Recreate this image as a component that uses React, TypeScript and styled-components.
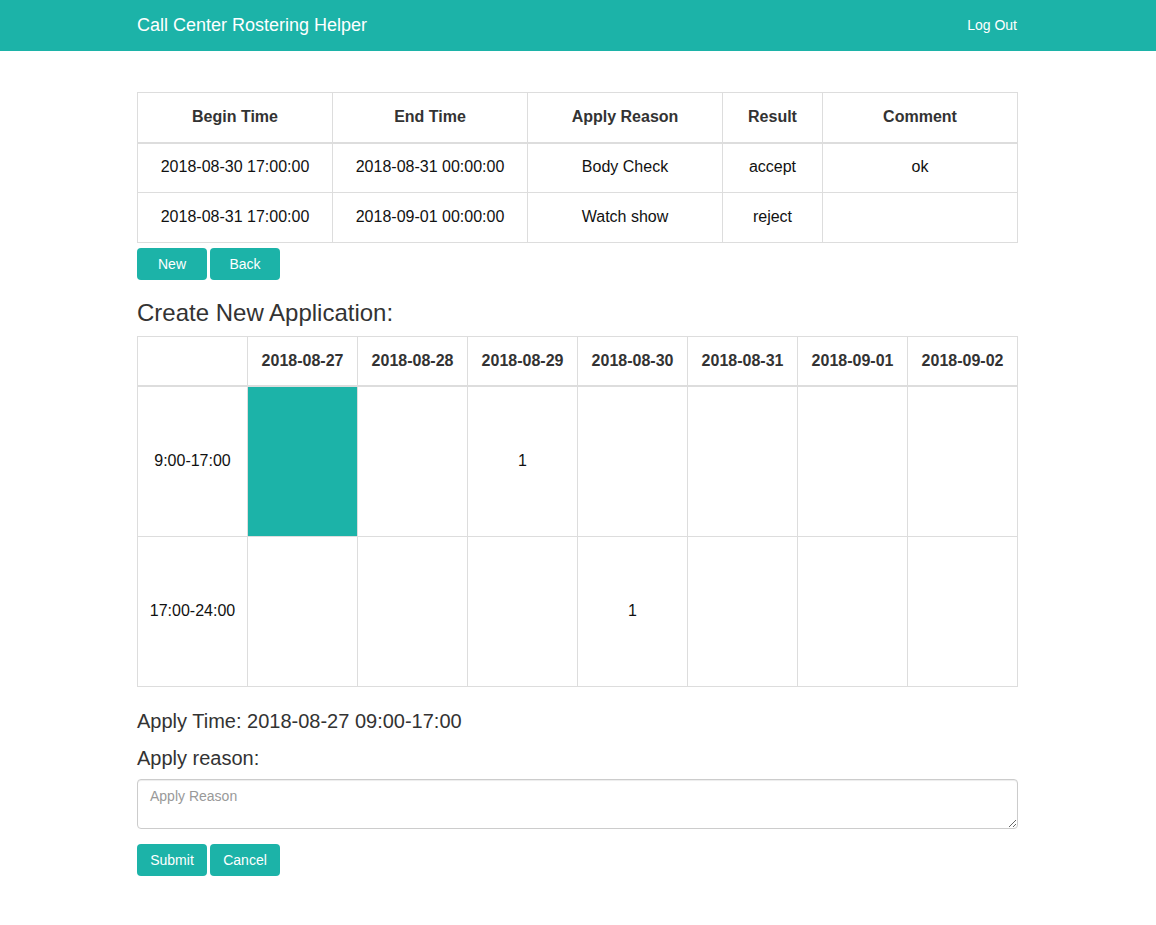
import React from "react";
import styled, { createGlobalStyle } from "styled-components";

const teal = "#1cb3a8";

const Global = createGlobalStyle`
  html, body { margin: 0; padding: 0; background: #fff; }
  body { font-family: "Liberation Sans", Arial, sans-serif; color: #333; }
  * { box-sizing: border-box; }
`;

const NavBar = styled.header`
  height: 51px;
  background: ${teal};
`;

const NavInner = styled.div`
  width: 881px;
  height: 100%;
  margin-left: calc(50% - 441px);
  display: flex;
  align-items: center;
  justify-content: space-between;
  padding-bottom: 1px;
`;

const Brand = styled.div`
  color: #fff;
  font-size: 18px;
  line-height: 20px;
`;

const NavLink = styled.a`
  color: #fff;
  font-size: 14px;
  line-height: 20px;
  text-decoration: none;
  margin-right: 1px;
`;

const Container = styled.main`
  width: 881px;
  margin-left: calc(50% - 441px);
  padding-top: 41px;
  padding-bottom: 40px;
`;

const Table = styled.table`
  width: 881px;
  border-collapse: collapse;
  table-layout: fixed;
  font-size: 16px;
`;

const Th = styled.th<{ $w?: number; $h: number }>`
  width: ${(p) => (p.$w ? `${p.$w}px` : "auto")};
  height: ${(p) => p.$h}px;
  border: 1px solid #ddd;
  border-bottom: 2px solid #ddd;
  font-weight: bold;
  color: #333;
  text-align: center;
  vertical-align: middle;
  padding: 0 4px;
`;

const Td = styled.td<{ $h: number; $selected?: boolean }>`
  height: ${(p) => p.$h}px;
  border: 1px solid #ddd;
  text-align: center;
  vertical-align: middle;
  color: #111;
  background: ${(p) => (p.$selected ? teal : "#fff")};
  padding: 0 4px 1px;
`;

const ButtonRow = styled.div<{ $mt: number }>`
  display: flex;
  gap: 3px;
  margin-top: ${(p) => p.$mt}px;
`;

const Button = styled.button`
  width: 70px;
  height: 32px;
  border: none;
  border-radius: 4px;
  background: ${teal};
  color: #fff;
  font-family: "Liberation Sans", Arial, sans-serif;
  font-size: 14px;
  cursor: pointer;
  padding: 0;
`;

const Heading = styled.h3`
  margin: 20px 0 10px;
  font-size: 24px;
  font-weight: normal;
  line-height: 26px;
  color: #333;
`;

const Label = styled.div<{ $mt: number }>`
  margin-top: ${(p) => p.$mt}px;
  font-size: 20px;
  line-height: 22px;
  color: #333;
`;

const TextArea = styled.textarea`
  display: block;
  width: 881px;
  height: 50px;
  margin-top: 10px;
  border: 1px solid #ccc;
  border-radius: 4px;
  padding: 8px 12px;
  font-family: "Liberation Sans", Arial, sans-serif;
  font-size: 14px;
  color: #555;
  box-shadow: inset 0 1px 1px rgba(0, 0, 0, 0.075);
  &::placeholder { color: #999; }
`;

const history = [
  ["2018-08-30 17:00:00", "2018-08-31 00:00:00", "Body Check", "accept", "ok"],
  ["2018-08-31 17:00:00", "2018-09-01 00:00:00", "Watch show", "reject", ""],
];

const dates = [
  "2018-08-27",
  "2018-08-28",
  "2018-08-29",
  "2018-08-30",
  "2018-08-31",
  "2018-09-01",
  "2018-09-02",
];

const slots: { label: string; cells: string[]; selected?: number }[] = [
  { label: "9:00-17:00", cells: ["", "", "1", "", "", "", ""], selected: 0 },
  { label: "17:00-24:00", cells: ["", "", "", "1", "", "", ""] },
];

export default function App() {
  return (
    <>
      <Global />
      <NavBar>
        <NavInner>
          <Brand>Call Center Rostering Helper</Brand>
          <NavLink href="#">Log Out</NavLink>
        </NavInner>
      </NavBar>
      <Container>
        <Table>
          <thead>
            <tr>
              <Th $w={195} $h={50}>Begin Time</Th>
              <Th $w={195} $h={50}>End Time</Th>
              <Th $w={195} $h={50}>Apply Reason</Th>
              <Th $w={100} $h={50}>Result</Th>
              <Th $h={50}>Comment</Th>
            </tr>
          </thead>
          <tbody>
            {history.map((row, i) => (
              <tr key={i}>
                {row.map((c, j) => (
                  <Td key={j} $h={50}>
                    {c}
                  </Td>
                ))}
              </tr>
            ))}
          </tbody>
        </Table>
        <ButtonRow $mt={5}>
          <Button>New</Button>
          <Button>Back</Button>
        </ButtonRow>
        <Heading>Create New Application:</Heading>
        <Table>
          <thead>
            <tr>
              <Th $w={110} $h={49.5}></Th>
              {dates.map((d) => (
                <Th key={d} $w={110} $h={49.5}>
                  {d}
                </Th>
              ))}
            </tr>
          </thead>
          <tbody>
            {slots.map((s) => (
              <tr key={s.label}>
                <Td $h={150}>{s.label}</Td>
                {s.cells.map((c, j) => (
                  <Td key={j} $h={150} $selected={s.selected === j}>
                    {c}
                  </Td>
                ))}
              </tr>
            ))}
          </tbody>
        </Table>
        <Label $mt={23}>Apply Time: 2018-08-27 09:00-17:00</Label>
        <Label $mt={15}>Apply reason:</Label>
        <TextArea placeholder="Apply Reason" />
        <ButtonRow $mt={15}>
          <Button>Submit</Button>
          <Button>Cancel</Button>
        </ButtonRow>
      </Container>
    </>
  );
}
